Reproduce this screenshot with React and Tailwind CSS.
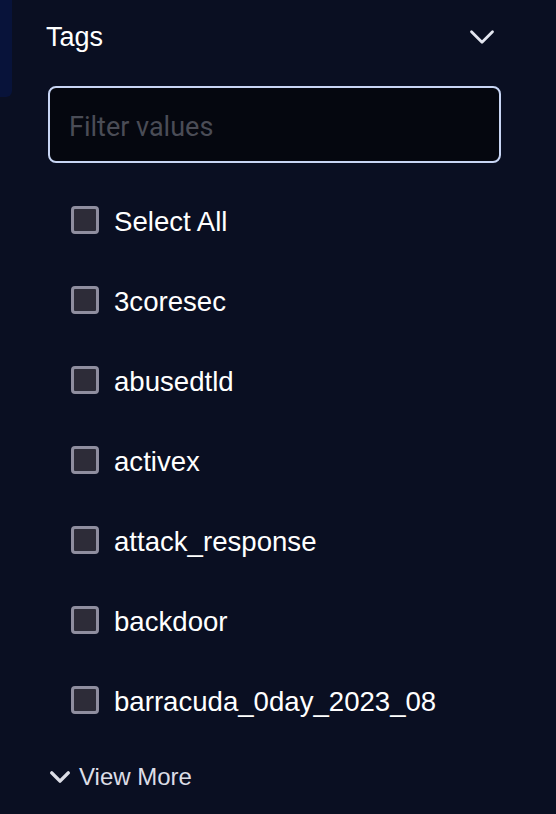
import React from 'react';

const tags = ['Select All', '3coresec', 'abusedtld', 'activex', 'attack_response', 'backdoor', 'barracuda_0day_2023_08'];

const Chevron = ({ className, width = 2.4 }) => (
  <svg viewBox="0 0 24 24" className={className} fill="none" stroke="currentColor" strokeWidth={width} strokeLinecap="round" strokeLinejoin="round">
    <path d="M3 7.5l9 9 9-9" />
  </svg>
);

export default function App() {
  return (
    <div className="relative w-[556px] h-[814px] bg-[#0a0f22] overflow-hidden" style={{ fontFamily: '"Liberation Sans", Arial, sans-serif' }}>
      {/* edge of the panel behind */}
      <div className="absolute left-0 top-0 w-[12px] h-[97px] bg-[#08133a] rounded-br-[6px]" />

      <div className="pl-[46px] pr-[55px] pt-[21px]">
        <div className="flex items-center justify-between">
          <span className="text-[27px] text-white leading-[32px]">Tags</span>
          <Chevron className="w-[28px] h-[28px] text-[#e4e6f0] mr-[5px] -mt-[1px]" />
        </div>

        <div className="mt-[33px] ml-[2px] h-[77px] rounded-[8px] border-2 border-[#c8d5f4] bg-[#05070f] flex items-center px-[19px] pt-[5px]">
          <span className="text-[27px] text-[#4a4c56]" style={{ fontFamily: 'Roboto, sans-serif' }}>Filter values</span>
        </div>

        <div className="mt-[43px] pl-[25px] flex flex-col gap-[52px]">
          {tags.map((t) => (
            <label key={t} className="flex items-center gap-[15px] h-[28px]">
              <span className="w-[28px] h-[28px] rounded-[4px] border-[3px] border-[#8f8e9f] bg-[#2d2c38] shrink-0" />
              <span className="text-[27.6px] text-white leading-none pt-[4px]">{t}</span>
            </label>
          ))}
        </div>

        <div className="mt-[51px] ml-[3px] flex items-center gap-[8px] text-[#dcdde6]">
          <Chevron className="w-[22px] h-[22px]" width={3.8} />
          <span className="text-[24px] leading-none">View More</span>
        </div>
      </div>
    </div>
  );
}
